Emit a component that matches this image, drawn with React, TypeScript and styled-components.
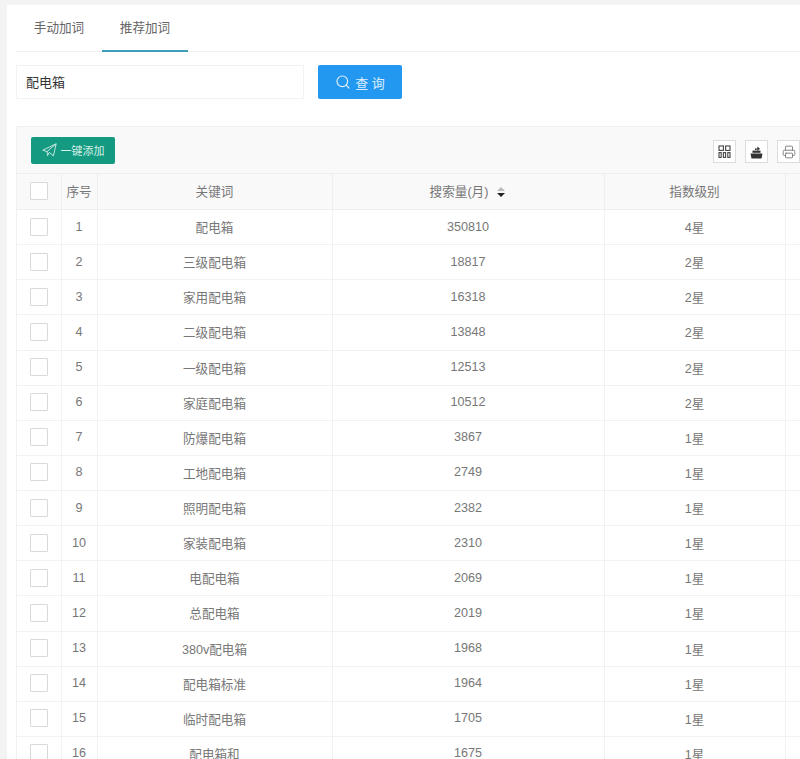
import React from 'react';
import styled, { createGlobalStyle } from 'styled-components';
import { Search, Printer } from 'lucide-react';

const rows = [
  ['配电箱', '350810', '4星'],
  ['三级配电箱', '18817', '2星'],
  ['家用配电箱', '16318', '2星'],
  ['二级配电箱', '13848', '2星'],
  ['一级配电箱', '12513', '2星'],
  ['家庭配电箱', '10512', '2星'],
  ['防爆配电箱', '3867', '1星'],
  ['工地配电箱', '2749', '1星'],
  ['照明配电箱', '2382', '1星'],
  ['家装配电箱', '2310', '1星'],
  ['电配电箱', '2069', '1星'],
  ['总配电箱', '2019', '1星'],
  ['380v配电箱', '1968', '1星'],
  ['配电箱标准', '1964', '1星'],
  ['临时配电箱', '1705', '1星'],
  ['配电箱和', '1675', '1星'],
];

const App: React.FC = () => {
  return (
    <Page>
      <GlobalStyle />
      <Card>
        <Tabs>
          <Tab>手动加词</Tab>
          <Tab $active>推荐加词</Tab>
        </Tabs>
        <SearchBar>
          <SearchInput readOnly value="配电箱" />
          <SearchButton>
            <Search size={16} strokeWidth={1.8} />
            查 询
          </SearchButton>
        </SearchBar>
        <Panel>
          <Toolbar>
            <AddButton>
              <svg width="15" height="14" viewBox="0 0 15 14" fill="none" stroke="#d5efe9" strokeWidth="0.9" strokeLinejoin="round">
                <path d="M.8 7.2 14.2.8 11.4 12.8 7.2 9.4 5.6 12.6 5 8.6z" />
                <path d="M14.2.8 5 8.6" />
              </svg>
              一键添加
            </AddButton>
            <ToolGroup>
              <ToolButton>
                <svg width="13" height="13" viewBox="0 0 13 13" fill="none" stroke="#444" strokeWidth="1.1">
                  <rect x="1" y="1" width="4.4" height="4.4" />
                  <rect x="7.6" y="1" width="4.4" height="4.4" />
                  <rect x="1" y="7.6" width="2.2" height="4.8" />
                  <rect x="5.4" y="7.6" width="2.2" height="4.8" />
                  <rect x="9.8" y="7.6" width="2.2" height="4.8" />
                </svg>
              </ToolButton>
              <ToolButton>
                <svg width="13" height="14" viewBox="0 0 13 14" fill="#333">
                  <path d="M.5 8.5h12l-1 5h-10z" />
                  <rect x="2.5" y="5.6" width="8" height="2.2" />
                  <path d="M5 5V3.4h2.4V1.6L10 3.8 7.4 6V4.6H6.2V5z" />
                </svg>
              </ToolButton>
              <ToolButton>
                <Printer size={14} strokeWidth={1.5} color="#777" />
              </ToolButton>
            </ToolGroup>
          </Toolbar>
          <Table>
            <thead>
              <tr>
                <HeadCell $width={45}><CheckBox /></HeadCell>
                <HeadCell $width={36}>序号</HeadCell>
                <HeadCell $width={235}>关键词</HeadCell>
                <HeadCell $width={272}>
                  搜索量(月)
                  <SortIcon viewBox="0 0 10 12" width="10" height="12">
                    <path d="M5 1l4 4H1z" fill="#bbb" />
                    <path d="M5 11L1 7h8z" fill="#222" />
                  </SortIcon>
                </HeadCell>
                <HeadCell $width={181}>指数级别</HeadCell>
                <HeadCell />
              </tr>
            </thead>
            <tbody>
              {rows.map((row, i) => (
                <tr key={row[0]}>
                  <Cell><CheckBox /></Cell>
                  <Cell>{i + 1}</Cell>
                  <Cell>{row[0]}</Cell>
                  <Cell>{row[1]}</Cell>
                  <Cell>{row[2]}</Cell>
                  <Cell />
                </tr>
              ))}
            </tbody>
          </Table>
        </Panel>
      </Card>
    </Page>
  );
};

const GlobalStyle = createGlobalStyle`
  html, body {
    margin: 0;
    height: 759px;
    overflow: hidden;
    background: #f3f3f3;
  }
`;

const Page = styled.div`
  height: 759px;
  overflow: hidden;
  padding: 5px 0 0 7px;
  box-sizing: border-box;
  font-family: "Liberation Sans", "Noto Sans CJK SC", sans-serif;
  font-size: 12.6px;
  color: #777;
`;

const Card = styled.div`
  width: 900px;
  min-height: 800px;
  background: #fff;
  padding: 0 0 0 9px;
  box-sizing: border-box;
`;

const Tabs = styled.div`
  display: flex;
  height: 46px;
  border-bottom: 1px solid #f0f0f0;
`;

const Tab = styled.div<{ $active?: boolean }>`
  width: 86px;
  display: flex;
  align-items: center;
  justify-content: center;
  box-sizing: border-box;
  height: 47px;
  padding-bottom: 3px;
  color: #666;
  border-bottom: 2px solid ${({ $active }) => ($active ? '#3d9dbb' : 'transparent')};
`;

const SearchBar = styled.div`
  display: flex;
  gap: 14px;
  margin-top: 13px;
`;

const SearchInput = styled.input`
  width: 288px;
  height: 34px;
  box-sizing: border-box;
  padding: 0 9px 2px;
  border: 1px solid #f2f2f2;
  font: inherit;
  font-size: 13px;
  color: #333;
  outline: none;
`;

const SearchButton = styled.button`
  width: 84px;
  height: 34px;
  display: flex;
  align-items: center;
  justify-content: center;
  gap: 4px;
  border: none;
  border-radius: 2px;
  background: #2298f1;
  color: #dceefc;
  font: inherit;
  font-size: 13px;
`;

const Panel = styled.div`
  margin-top: 27px;
  border: 1px solid #f0f0f0;
  border-right: none;
`;

const Toolbar = styled.div`
  height: 46px;
  width: 783px;
  display: flex;
  align-items: center;
  justify-content: space-between;
  box-sizing: border-box;
  padding: 0 0 0 14px;
  background: #f9f9f9;
`;

const AddButton = styled.button`
  width: 84px;
  height: 27px;
  display: flex;
  align-items: center;
  justify-content: center;
  gap: 4px;
  padding: 0;
  border: none;
  border-radius: 2px;
  background: #149a80;
  color: #d5efe9;
  font: inherit;
  font-size: 11px;
`;

const ToolGroup = styled.div`
  display: flex;
  gap: 9px;
  margin-top: 3px;
`;

const ToolButton = styled.div`
  width: 23px;
  height: 23px;
  box-sizing: border-box;
  display: flex;
  align-items: center;
  justify-content: center;
  border: 1px solid #dddddd;
  background: #fff;
`;

const Table = styled.table`
  border-collapse: collapse;
  table-layout: fixed;
  width: 889px;
`;

const HeadCell = styled.th<{ $width?: number }>`
  width: ${({ $width }) => ($width ? `${$width}px` : 'auto')};
  height: 36px;
  padding: 0 0 2px;
  box-sizing: border-box;
  background: #f9f9f9;
  border: 1px solid #eeeeee;
  font-weight: 400;
  text-align: center;
  &:first-child { border-left: none; width: 44px; }
`;

const Cell = styled.td`
  height: 35.13px;
  padding: 0 0 1px;
  box-sizing: border-box;
  border: 1px solid #f2f2f2;
  text-align: center;
  &:first-child { border-left: none; }
`;

const CheckBox = styled.span`
  display: block;
  width: 16px;
  height: 16px;
  margin: 0 auto;
  border: 1px solid #d9d9d9;
  border-radius: 1px;
  background: #fff;
`;

const SortIcon = styled.svg`
  margin-left: 8px;
  vertical-align: -2px;
`;

export default App;
